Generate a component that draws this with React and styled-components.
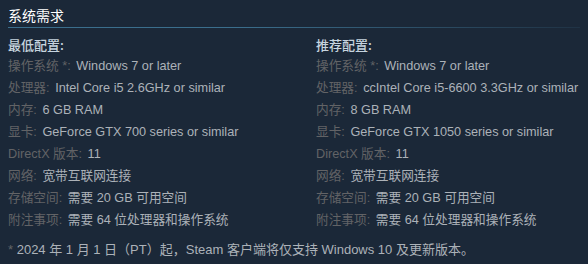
import React from "react";
import styled, { createGlobalStyle } from "styled-components";

const GlobalStyle = createGlobalStyle`
  html, body {
    margin: 0;
    padding: 0;
    background: #1b2838;
  }
  body {
    font-family: "Liberation Sans", Arial, "Noto Sans CJK SC", sans-serif;
  }
`;

const minimum = [
  ["操作系统 *:", "Windows 7 or later"],
  ["处理器:", "Intel Core i5 2.6GHz or similar"],
  ["内存:", "6 GB RAM"],
  ["显卡:", "GeForce GTX 700 series or similar"],
  ["DirectX 版本:", "11"],
  ["网络:", "宽带互联网连接"],
  ["存储空间:", "需要 20 GB 可用空间"],
  ["附注事项:", "需要 64 位处理器和操作系统"],
];

const recommended = [
  ["操作系统 *:", "Windows 7 or later"],
  ["处理器:", "ccIntel Core i5-6600 3.3GHz or similar"],
  ["内存:", "8 GB RAM"],
  ["显卡:", "GeForce GTX 1050 series or similar"],
  ["DirectX 版本:", "11"],
  ["网络:", "宽带互联网连接"],
  ["存储空间:", "需要 20 GB 可用空间"],
  ["附注事项:", "需要 64 位处理器和操作系统"],
];

const Column = ({ title, items }) => (
  <Col>
    <ColTitle>{title}</ColTitle>
    {items.map(([label, value]) => (
      <Row key={label}>
        <Label>{label}</Label> <Value>{value}</Value>
      </Row>
    ))}
  </Col>
);

const App = () => (
  <>
    <GlobalStyle />
    <Page>
      <Title>系统需求</Title>
      <Divider />
      <Columns>
        <Column title="最低配置:" items={minimum} />
        <Column title="推荐配置:" items={recommended} />
      </Columns>
      <Footnote>
        <Star>*</Star> 2024 年 1 月 1 日（PT）起，Steam 客户端将仅支持 Windows 10 及更新版本。
      </Footnote>
    </Page>
  </>
);

export default App;

const Page = styled.div`
  width: 588px;
  height: 264px;
  box-sizing: border-box;
  padding: 6px 8px 0 8px;
  background: #1b2838;
  overflow: hidden;
`;

const Title = styled.div`
  color: #ffffff;
  font-size: 14px;
  line-height: 18px;
  padding-bottom: 3px;
  font-family: "Noto Sans CJK SC", sans-serif;
`;

const Divider = styled.div`
  height: 1px;
  background: linear-gradient(to right, #3b6e8c 0%, #3b6e8c 40%, rgba(59, 110, 140, 0.15) 100%);
  margin-bottom: 7px;
`;

const Columns = styled.div`
  display: grid;
  grid-template-columns: 308px 1fr;
`;

const Col = styled.div`
  display: flex;
  flex-direction: column;
`;

const ColTitle = styled.div`
  color: #c6d4df;
  font-size: 13px;
  line-height: 20px;
  font-weight: 500;
  font-family: "Noto Sans CJK SC", sans-serif;
`;

const Row = styled.div`
  font-size: 12.7px;
  line-height: 22px;
  white-space: nowrap;
  color: #acb2b8;
`;

const Label = styled.span`
  color: #626366;
  margin-right: 2px;
`;

const Value = styled.span`
  color: #acb2b8;
`;

const Footnote = styled.div`
  margin-top: 8px;
  font-size: 13px;
  line-height: 22px;
  color: #acb2b8;
  white-space: nowrap;
`;

const Star = styled.span`
  color: #626366;
`;
